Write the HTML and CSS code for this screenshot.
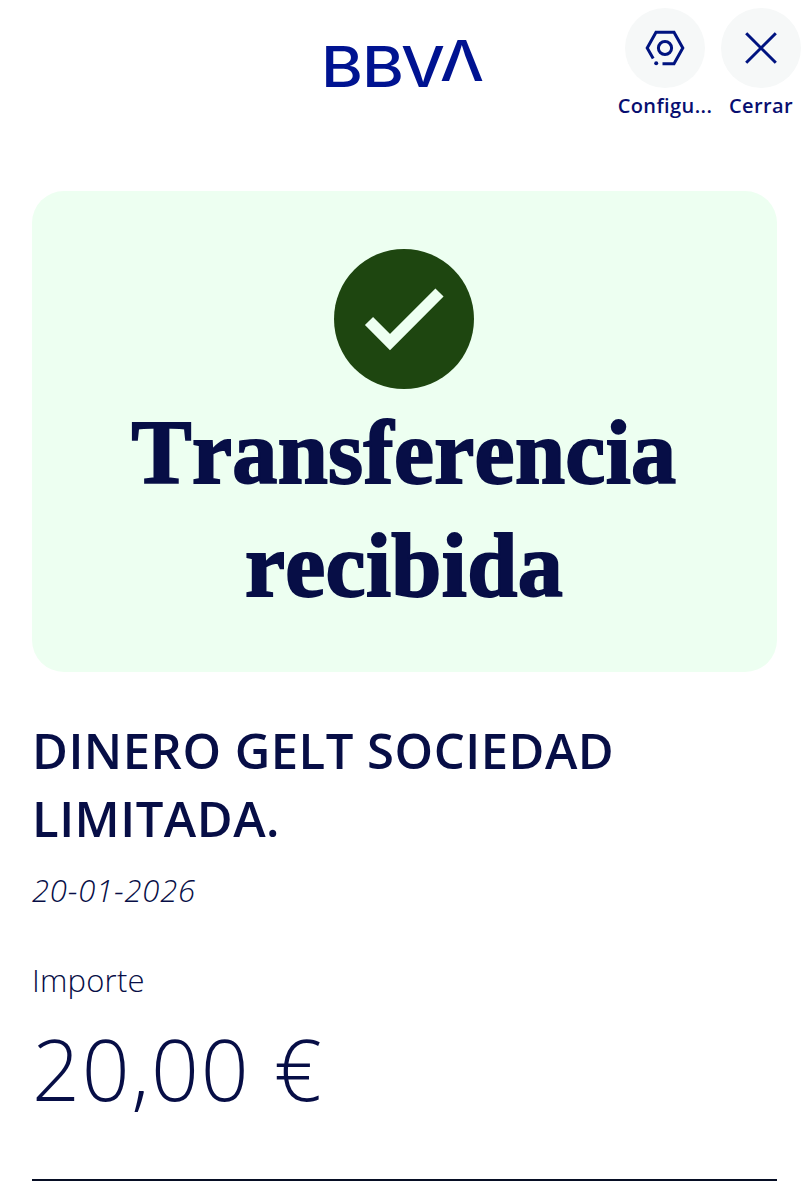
FILE: index.html
```
<!DOCTYPE html>
<html lang="es">
<head>
  <meta charset="UTF-8" />
  <meta name="viewport" content="width=device-width, initial-scale=1.0"/>
  <title>BBVA - Transferencia recibida</title>
  <link rel="stylesheet" href="styles.css">
</head>
<body>
  <header class="header">
    <svg class="logo" viewBox="0 0 160 56" role="img" aria-label="BBVA">
      <text x="-3" y="51" textLength="42" lengthAdjust="spacingAndGlyphs">B</text>
      <text x="38" y="51" textLength="42" lengthAdjust="spacingAndGlyphs">B</text>
      <text x="77" y="51" textLength="44" lengthAdjust="spacingAndGlyphs">V</text>
      <text x="116" y="45" textLength="44" lengthAdjust="spacingAndGlyphs">Λ</text>
    </svg>
    <nav class="actions">
      <button class="action">
        <span class="action-icon">
          <svg width="40" height="40" viewBox="0 0 40 40">
            <path d="M8.2 30.5 L2.2 20 L11 4.3 H29 L37.8 20 L29 35.7 H17.5"/>
            <circle cx="20" cy="20" r="6.6"/>
            <circle class="dot" cx="11.2" cy="35.3" r="2"/>
          </svg>
        </span>
        <span class="action-label">Configu...</span>
      </button>
      <button class="action">
        <span class="action-icon">
          <svg width="40" height="40" viewBox="0 0 40 40">
            <path d="M5.200 5.200 L34.800 34.800 M34.800 5.200 L5.200 34.800"/>
          </svg>
        </span>
        <span class="action-label">Cerrar</span>
      </button>
    </nav>
  </header>

  <main class="content">
    <section class="card">
      <svg class="check" width="140" height="140" viewBox="0 0 140 140">
        <circle cx="70" cy="70" r="70"/>
        <path d="M35 72 L56 93 L105.500 43.500"/>
      </svg>
      <h1>Transferencia<br>recibida</h1>
    </section>

    <section class="details">
      <h2>DINERO GELT SOCIEDAD<br>LIMITADA.</h2>
      <p class="date">20-01-2026</p>
      <p class="label">Importe</p>
      <p class="amount">20,00 €</p>
    </section>
  </main>
</body>
</html>
```
FILE: styles.css
```
body {
  font-family: "Open Sans", "Liberation Sans", sans-serif;
  margin: 0;
  background: #fff;
  color: #070e46;
}
h1, h2, p {
  margin: 0;
}
.header {
  display: grid;
  grid-template-columns: 1fr 160px 1fr;
  height: 191px;
  align-items: start;
}
.logo {
  grid-column: 2;
  width: 160px;
  height: 56px;
  margin-top: 36px;
  overflow: visible;
}
.logo text {
  font-family: Inter, sans-serif;
  font-size: 56px;
  font-weight: 500;
  fill: #001391;
}
.actions {
  display: flex;
  justify-content: flex-end;
  gap: 4px;
  padding: 8px 1px 0 0;
}
.action {
  display: flex;
  flex-direction: column;
  align-items: center;
  padding: 0;
  border: none;
  background: none;
  width: 92px;
  font-family: inherit;
  color: #070e70;
}
.action-icon {
  display: flex;
  align-items: center;
  justify-content: center;
  width: 80px;
  height: 80px;
  border-radius: 50%;
  background: #f6f8f8;
}
.action-icon svg {
  fill: none;
  stroke: #001380;
  stroke-width: 3;
}
.action-icon .dot {
  fill: #001380;
  stroke: none;
}
.action-label {
  font-size: 20px;
  font-weight: 600;
  line-height: 24px;
  margin-top: 6px;
  letter-spacing: 0.4px;
  white-space: nowrap;
}
.content {
  padding: 0 31px 0 32px;
}
.card {
  height: 481px;
  box-sizing: border-box;
  padding: 58px 1px 0 0;
  border-radius: 32px;
  background: #edfff1;
  text-align: center;
}
.check {
  display: block;
  margin: 0 auto;
}
.check circle {
  fill: #1e4610;
}
.check path {
  fill: none;
  stroke: #edfff1;
  stroke-width: 11.500;
}
h1 {
  font-family: "Liberation Serif", serif;
  font-size: 90px;
  font-weight: bold;
  font-kerning: none;
  letter-spacing: 0.4px;
  line-height: 113px;
  margin-top: 7px;
  -webkit-text-stroke: 2px #070e46;
}
.details {
  height: 509px;
  box-sizing: border-box;
  padding-top: 44px;
  border-bottom: 2px solid #070e24;
}
h2 {
  font-size: 49px;
  font-weight: 600;
  line-height: 68px;
  letter-spacing: 0.5px;
}
.date {
  font-size: 31px;
  font-weight: 300;
  font-style: italic;
  line-height: 36px;
  letter-spacing: 0.8px;
  margin-top: 20px;
}
.label {
  font-size: 31px;
  font-weight: 300;
  line-height: 36px;
  letter-spacing: 0.2px;
  margin-top: 54px;
}
.amount {
  font-size: 84px;
  font-weight: 330;
  line-height: 96px;
  letter-spacing: 1.7px;
  margin-top: 23px;
}
```
